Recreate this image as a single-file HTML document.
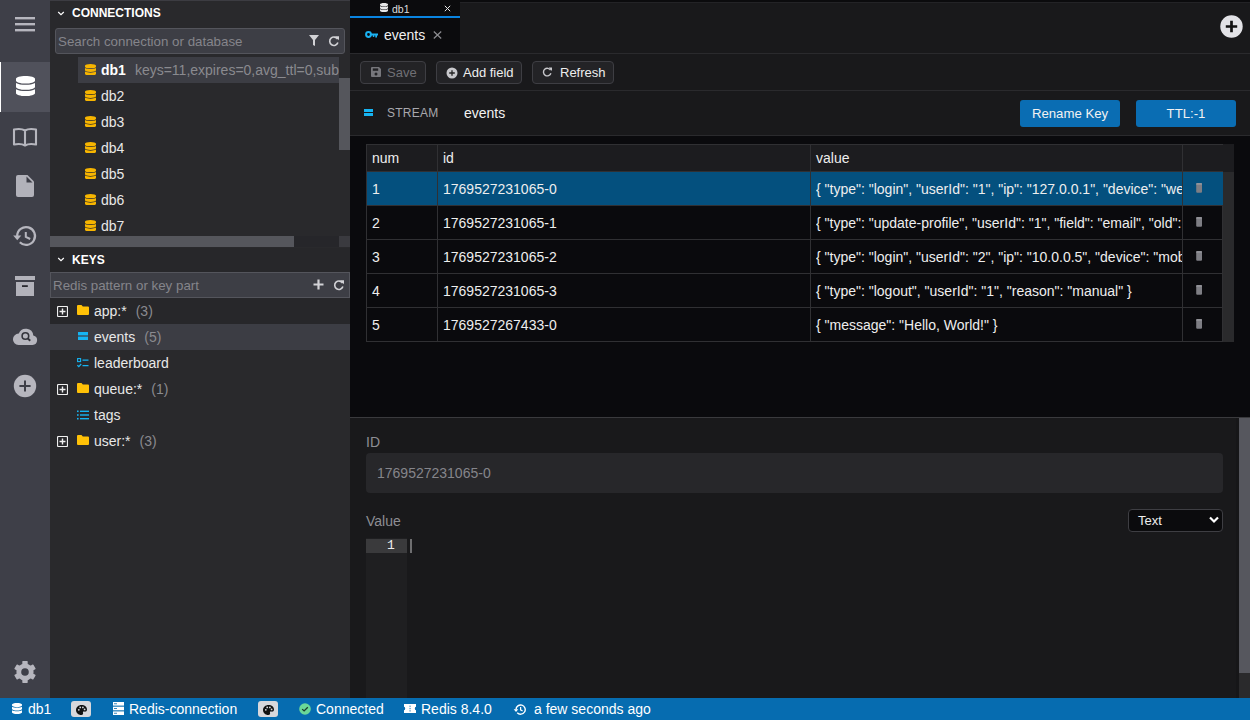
<!DOCTYPE html>
<html><head><meta charset="utf-8">
<style>
*{box-sizing:border-box;margin:0;padding:0}
html,body{width:1250px;height:720px;overflow:hidden;background:#19191b;font-family:"Liberation Sans",sans-serif;color:#e5e5e5}
.a{position:absolute}
svg{display:block}
#iconbar{left:0;top:0;width:50px;height:698px;background:#3e3f48}
#conn{left:50px;top:0;width:300px;height:698px;background:#29292c;overflow:hidden}
#main{left:350px;top:0;width:900px;height:698px;background:#19191b;overflow:hidden}
#status{left:0;top:698px;width:1250px;height:22px;background:#066cb0;color:#fff;font-size:14px}
.hdr{font-size:12px;font-weight:bold;color:#fff;line-height:14px}
.ph{color:#85858b;font-size:13.33px;line-height:16px;white-space:nowrap}
.row{height:26px;font-size:14px;line-height:16px;white-space:nowrap;color:#e8e8e8}
.cnt{color:#8a8a8f}
.btn{height:23px;border:1px solid #3e3e43;border-radius:4px;background:#232326;font-size:13px;line-height:16px;color:#e8e8e8;white-space:nowrap}
.pbtn{height:27px;border-radius:3px;background:#0a6db3;font-size:13.2px;color:#f2f2f2;text-align:center;line-height:27px}
table{border-collapse:collapse}
.tb{left:16px;top:144px;width:868px;font-size:14px;color:#eee}
.tr{position:absolute;left:0;width:857px;height:34px;border-bottom:1px solid #2c2c2f}
.c{position:absolute;top:0;height:100%;border-left:1px solid #2c2c2f;line-height:34px;padding-left:6px;white-space:nowrap;overflow:hidden}
.st{font-size:14px;line-height:22px;white-space:nowrap}
</style></head>
<body>
<!-- ICON BAR -->
<div id="iconbar" class="a">
  <div class="a" style="left:0;top:62px;width:50px;height:50px;background:#50515b"></div>
  <div class="a" style="left:0;top:62px;width:1px;height:50px;background:#fff"></div>
</div>

<!-- CONNECTIONS PANEL -->
<div id="conn" class="a">
  <div class="a" style="left:0;top:0;width:300px;height:1px;background:#3c3c42"></div>
  <div class="a hdr" style="left:22px;top:6px">CONNECTIONS</div>
  <div class="a" style="left:5px;top:28px;width:290px;height:26px;border:1px solid #54555c;border-radius:3px;background:#3d3e45"></div>
  <div class="a ph" style="left:8px;top:34px">Search connection or database</div>

  <div class="a" style="left:28px;top:57px;width:261px;height:26px;background:#3c3d44"></div>
  <div class="a row" style="left:51px;top:62px"><b style="color:#fff">db1</b><span class="cnt" style="margin-left:9px">keys=11,expires=0,avg_ttl=0,sub</span></div>
  <div class="a row" style="left:51px;top:88px">db2</div>
  <div class="a row" style="left:51px;top:114px">db3</div>
  <div class="a row" style="left:51px;top:140px">db4</div>
  <div class="a row" style="left:51px;top:166px">db5</div>
  <div class="a row" style="left:51px;top:192px">db6</div>
  <div class="a row" style="left:51px;top:218px">db7</div>
  <!-- v scrollbar -->
  <div class="a" style="left:289px;top:57px;width:11px;height:180px;background:#29292c"></div>
  <div class="a" style="left:289px;top:78px;width:11px;height:72px;background:#55565c"></div>
  <!-- h scrollbar -->
  <div class="a" style="left:0;top:236px;width:289px;height:11px;background:#26262a"></div>
  <div class="a" style="left:0;top:236px;width:244px;height:11px;background:#55565c"></div>
  <div class="a" style="left:289px;top:236px;width:11px;height:11px;background:#3a3a3f"></div>

  <!-- KEYS -->
  <div class="a" style="left:0;top:248px;width:300px;height:24px;background:#27272a"></div>
  <div class="a hdr" style="left:22px;top:253px">KEYS</div>
  <div class="a" style="left:0;top:272px;width:300px;height:26px;border:1px solid #54555c;background:#3d3e45"></div>
  <div class="a ph" style="left:3px;top:278px">Redis pattern or key part</div>

  <div class="a" style="left:0;top:298px;width:300px;height:26px;background:#27272a"></div>
  <div class="a" style="left:0;top:324px;width:300px;height:26px;background:#3c3d44"></div>
  <div class="a row" style="left:44px;top:303px">app:*<span class="cnt" style="margin-left:9px">(3)</span></div>
  <div class="a row" style="left:44px;top:329px">events<span class="cnt" style="margin-left:9px">(5)</span></div>
  <div class="a row" style="left:44px;top:355px">leaderboard</div>
  <div class="a row" style="left:44px;top:381px">queue:*<span class="cnt" style="margin-left:9px">(1)</span></div>
  <div class="a row" style="left:44px;top:407px">tags</div>
  <div class="a row" style="left:44px;top:433px">user:*<span class="cnt" style="margin-left:9px">(3)</span></div>
</div>

<!-- MAIN -->
<div id="main" class="a">
  <!-- tab bars -->
  <div class="a" style="left:0;top:0;width:900px;height:2px;background:#0b0b0d"></div>
  <div class="a" style="left:0;top:2px;width:900px;height:1px;background:#232326"></div>
  <div class="a" style="left:0;top:0;width:110px;height:53px;background:#0b0b0d"></div>
  <div class="a" style="left:0;top:16px;width:110px;height:2px;background:#0a84e0"></div>
  <div class="a" style="left:42px;top:1.5px;font-size:10.5px;line-height:14px;color:#ddd">db1</div>
  <div class="a" style="left:34px;top:25px;font-size:14px;line-height:20px;color:#f0f0f0">events</div>
  <div class="a" style="left:0;top:53px;width:900px;height:1px;background:#2a2a2d"></div>

  <!-- toolbar -->
  <div class="a btn" style="left:10px;top:61px;width:66px"></div>
  <div class="a btn" style="left:86px;top:61px;width:86px"></div>
  <div class="a btn" style="left:182px;top:61px;width:82px"></div>
  <div class="a" style="left:37px;top:65px;font-size:13px;line-height:16px;color:#707075">Save</div>
  <div class="a" style="left:113px;top:65px;font-size:13px;line-height:16px;color:#eee">Add field</div>
  <div class="a" style="left:210px;top:65px;font-size:13px;line-height:16px;color:#eee">Refresh</div>
  <div class="a" style="left:0;top:90px;width:900px;height:1px;background:#2a2a2d"></div>

  <!-- key info -->
  <div class="a" style="left:37px;top:105px;font-size:12px;letter-spacing:0.25px;line-height:16px;color:#a8a8ad">STREAM</div>
  <div class="a" style="left:114px;top:104px;font-size:14px;line-height:18px;color:#f2f2f2">events</div>
  <div class="a pbtn" style="left:670px;top:100px;width:100px">Rename Key</div>
  <div class="a pbtn" style="left:786px;top:100px;width:100px">TTL:-1</div>
  <div class="a" style="left:0;top:135px;width:900px;height:1px;background:#2a2a2d"></div>

  <!-- table area -->
  <div class="a" style="left:0;top:136px;width:900px;height:281px;background:#0a0a0d"></div>
  <div class="a" style="left:0;top:417px;width:900px;height:1px;background:#3a3a3d"></div>
  <!-- table -->
  <div class="a" style="left:16px;top:144px;width:857px;height:198px;background:#0a0a0d;border:1px solid #303033"></div>
  <div class="a" style="left:17px;top:145px;width:856px;height:26px;background:#1c1c1f"></div>
  <div class="a" style="left:873px;top:144px;width:11px;height:28px;background:#1c1c1f"></div>
  <div class="a" style="left:873px;top:172px;width:11px;height:170px;background:#2a2a2c"></div>
  <div class="a" style="left:17px;top:172px;width:856px;height:33px;background:#04507e"></div>
  <div class="a" style="left:16px;top:171px;width:857px;height:1px;background:#303033"></div>
  <div class="a" style="left:16px;top:205px;width:857px;height:1px;background:#303033"></div>
  <div class="a" style="left:16px;top:239px;width:857px;height:1px;background:#303033"></div>
  <div class="a" style="left:16px;top:273px;width:857px;height:1px;background:#303033"></div>
  <div class="a" style="left:16px;top:307px;width:857px;height:1px;background:#303033"></div>
  <div class="a" style="left:87px;top:144px;width:1px;height:198px;background:#303033"></div>
  <div class="a" style="left:460px;top:144px;width:1px;height:198px;background:#303033"></div>
  <div class="a" style="left:832px;top:144px;width:1px;height:198px;background:#303033"></div>
  <div class="a" style="left:0;top:0;font-size:14px;line-height:16px;color:#eee;white-space:nowrap">
    <div class="a" style="left:22px;top:150px">num</div>
    <div class="a" style="left:93px;top:150px">id</div>
    <div class="a" style="left:466px;top:150px">value</div>
    <div class="a" style="left:22px;top:181px">1</div>
    <div class="a" style="left:22px;top:215px">2</div>
    <div class="a" style="left:22px;top:249px">3</div>
    <div class="a" style="left:22px;top:283px">4</div>
    <div class="a" style="left:22px;top:317px">5</div>
    <div class="a" style="left:93px;top:181px">1769527231065-0</div>
    <div class="a" style="left:93px;top:215px">1769527231065-1</div>
    <div class="a" style="left:93px;top:249px">1769527231065-2</div>
    <div class="a" style="left:93px;top:283px">1769527231065-3</div>
    <div class="a" style="left:93px;top:317px">1769527267433-0</div>
    <div class="a" style="left:466px;top:181px;width:366px;overflow:hidden">{ "type": "login", "userId": "1", "ip": "127.0.0.1", "device": "web" }</div>
    <div class="a" style="left:466px;top:215px;width:366px;overflow:hidden">{ "type": "update-profile", "userId": "1", "field": "email", "old": "a" }</div>
    <div class="a" style="left:466px;top:249px;width:366px;overflow:hidden">{ "type": "login", "userId": "2", "ip": "10.0.0.5", "device": "mobile" }</div>
    <div class="a" style="left:466px;top:283px">{ "type": "logout", "userId": "1", "reason": "manual" }</div>
    <div class="a" style="left:466px;top:317px">{ "message": "Hello, World!" }</div>
  </div>

  <!-- bottom panel -->
  <div class="a" style="left:16px;top:434px;font-size:14px;line-height:16px;color:#8e8e94">ID</div>
  <div class="a" style="left:16px;top:453px;width:857px;height:40px;border-radius:4px;background:#27272a"></div>
  <div class="a" style="left:27px;top:465px;font-size:14px;line-height:16px;color:#85858b">1769527231065-0</div>
  <div class="a" style="left:16px;top:513px;font-size:14px;line-height:16px;color:#8e8e94">Value</div>
  <div class="a" style="left:778px;top:509px;width:95px;height:23px;border:1px solid #3e3e43;border-radius:4px;background:#0b0b0d"></div>
  <div class="a" style="left:788px;top:513px;font-size:13px;line-height:16px;color:#eee">Text</div>
  <div class="a" style="left:16px;top:538px;width:41px;height:160px;background:#1f1f21"></div>
  <div class="a" style="left:16px;top:539px;width:41px;height:14px;background:#3a3a3c"></div>
  <div class="a" style="left:37px;top:538px;font-family:'Liberation Mono',monospace;font-size:13px;line-height:15px;color:#eee">1</div>
  <div class="a" style="left:60px;top:539px;width:2px;height:14px;background:#6e6e70"></div>
  <!-- right scrollbar -->
  <div class="a" style="left:886px;top:418px;width:3px;height:280px;background:#161618"></div><div class="a" style="left:889px;top:418px;width:11px;height:280px;background:#2a2a2c"></div><div class="a" style="left:889px;top:418px;width:11px;height:255px;background:#56575e"></div>
</div>

<!-- STATUS BAR -->
<div id="status" class="a">
  <div class="a st" style="left:28px;top:0">db1</div>
  <div class="a" style="left:71px;top:3px;width:20px;height:16px;border-radius:3px;background:#d8d8dc"></div>
  <div class="a st" style="left:129px;top:0">Redis-connection</div>
  <div class="a" style="left:258px;top:3px;width:20px;height:16px;border-radius:3px;background:#d8d8dc"></div>
  <div class="a st" style="left:316px;top:0">Connected</div>
  <div class="a st" style="left:421px;top:0">Redis 8.4.0</div>
  <div class="a st" style="left:534px;top:0">a few seconds ago</div>
</div>
<!-- ICONS -->
<div class="a" style="left:0;top:0;width:1250px;height:720px;pointer-events:none">
<!-- hamburger -->
<svg class="a" style="left:15px;top:16px" width="20" height="16"><rect x="0" y="1" width="20" height="2.4" fill="#b6b6be"/><rect x="0" y="7" width="20" height="2.4" fill="#b6b6be"/><rect x="0" y="13" width="20" height="2.4" fill="#b6b6be"/></svg>
<!-- database big -->
<svg class="a" style="left:16px;top:76px" width="19" height="20" viewBox="0 0 448 512" preserveAspectRatio="none"><path fill="#fff" d="M448 73.143v45.714C448 159.143 347.667 192 224 192S0 159.143 0 118.857V73.143C0 32.857 100.333 0 224 0s224 32.857 224 73.143zM448 176v102.857C448 319.143 347.667 352 224 352S0 319.143 0 278.857V176c48.125 33.143 136.208 48.572 224 48.572S399.874 209.143 448 176zm0 160v102.857C448 479.143 347.667 512 224 512S0 479.143 0 438.857V336c48.125 33.143 136.208 48.572 224 48.572S399.874 369.143 448 336z"/></svg>
<!-- book -->
<svg class="a" style="left:12px;top:127px" width="26" height="20" viewBox="0 0 26 20"><path d="M13 3.5C10.5 2 6 1.8 2 2.5V17.5C6 16.8 10.5 17 13 18.5C15.5 17 20 16.8 24 17.5V2.5C20 1.8 15.5 2 13 3.5ZM13 3.5V18.5" fill="none" stroke="#b6b6be" stroke-width="2.1" stroke-linejoin="round"/></svg>
<!-- file -->
<svg class="a" style="left:16px;top:175px" width="18" height="22" viewBox="0 0 18 22"><path d="M2 0H11.5L18 6.5V20Q18 22 16 22H2Q0 22 0 20V2Q0 0 2 0Z" fill="#b2b2ba"/><path d="M10.5 1.5V7.5H16.5Z" fill="#3e3f48"/></svg>
<!-- history -->
<svg class="a" style="left:12px;top:224px" width="26" height="24" viewBox="0 0 26 24"><path d="M5.2 12A8.9 8.9 0 1 1 7.8 18.3" fill="none" stroke="#b6b6be" stroke-width="2.2"/><path d="M1.2 11.6H9.3L5.25 16.2Z" fill="#b6b6be"/><path d="M13.8 8V12.8L18.2 15" fill="none" stroke="#b6b6be" stroke-width="2"/></svg>
<!-- archive -->
<svg class="a" style="left:15px;top:276px" width="20" height="21" viewBox="0 0 20 21"><rect x="0" y="0" width="20" height="4" fill="#b2b2ba"/><rect x="1" y="6" width="18" height="14" fill="#b2b2ba"/><rect x="7" y="9.2" width="5.8" height="1.8" fill="#2a2a30"/></svg>
<!-- cloud search -->
<svg class="a" style="left:12px;top:326px" width="26" height="20" viewBox="0 0 26 20"><path d="M6.5 19H20.5A4.8 4.8 0 0 0 21.3 9.5A7.5 7.5 0 0 0 6.8 7.6A5.7 5.7 0 0 0 6.5 19Z" fill="#b6b6be"/><circle cx="13.4" cy="10" r="3.3" fill="none" stroke="#34353c" stroke-width="1.6"/><path d="M15.8 12.4L18.2 14.8" stroke="#34353c" stroke-width="2"/></svg>
<!-- plus circle -->
<svg class="a" style="left:13px;top:374px" width="24" height="24" viewBox="0 0 24 24"><circle cx="12" cy="12" r="11.2" fill="#b6b6be"/><path d="M12 6.4V17.6M6.4 12H17.6" stroke="#3e3f48" stroke-width="2"/></svg>
<!-- gear -->
<svg class="a" style="left:13px;top:660px" width="24" height="24" viewBox="0 0 24 24"><g fill="#b6b6be"><circle cx="12" cy="12" r="8.6"/><rect x="9.3" y="1.1" width="5.4" height="21.8" rx="0.6"/><rect x="9.3" y="1.1" width="5.4" height="21.8" rx="0.6" transform="rotate(60 12 12)"/><rect x="9.3" y="1.1" width="5.4" height="21.8" rx="0.6" transform="rotate(120 12 12)"/></g><circle cx="12" cy="12" r="3.8" fill="#3e3f48"/></svg>

<!-- conn header chevrons -->
<svg class="a" style="left:57px;top:11px" width="8" height="5"><path d="M1.2 1L4 3.6L6.8 1" fill="none" stroke="#fff" stroke-width="1.2"/></svg>
<svg class="a" style="left:57px;top:257px" width="8" height="5"><path d="M1.2 1L4 3.6L6.8 1" fill="none" stroke="#fff" stroke-width="1.2"/></svg>
<!-- filter -->
<svg class="a" style="left:309px;top:35px" width="10" height="11" viewBox="0 0 10 11"><path d="M0 0H10L6 5V11L4 10V5Z" fill="#d2d2d6"/></svg>
<!-- refresh conn -->
<svg class="a" style="left:328px;top:35px" width="12" height="12" viewBox="0 0 12 12"><path d="M9.6 4.2A4.2 4.2 0 1 0 9.9 7.6" fill="none" stroke="#d2d2d6" stroke-width="1.6"/><path d="M7 1.2H11V5.2Z" fill="#d2d2d6"/></svg>
<!-- keys plus -->
<svg class="a" style="left:313px;top:279px" width="11" height="11"><path d="M5.5 0.5V10.5M0.5 5.5H10.5" stroke="#d2d2d6" stroke-width="2.2"/></svg>
<!-- keys refresh -->
<svg class="a" style="left:333px;top:279px" width="12" height="12" viewBox="0 0 12 12"><path d="M9.6 4.2A4.2 4.2 0 1 0 9.9 7.6" fill="none" stroke="#d2d2d6" stroke-width="1.6"/><path d="M7 1.2H11V5.2Z" fill="#d2d2d6"/></svg>
</div>
<div class="a" style="left:0;top:0;width:1250px;height:720px;pointer-events:none">
<svg class="a" style="left:84.7px;top:63.7px" width="11" height="11.6" viewBox="0 0 448 512" preserveAspectRatio="none"><path fill="#f7b500" d="M448 73.143v45.714C448 159.143 347.667 192 224 192S0 159.143 0 118.857V73.143C0 32.857 100.333 0 224 0s224 32.857 224 73.143zM448 176v102.857C448 319.143 347.667 352 224 352S0 319.143 0 278.857V176c48.125 33.143 136.208 48.572 224 48.572S399.874 209.143 448 176zm0 160v102.857C448 479.143 347.667 512 224 512S0 479.143 0 438.857V336c48.125 33.143 136.208 48.572 224 48.572S399.874 369.143 448 336z"/></svg>
<svg class="a" style="left:84.7px;top:89.7px" width="11" height="11.6" viewBox="0 0 448 512" preserveAspectRatio="none"><path fill="#f7b500" d="M448 73.143v45.714C448 159.143 347.667 192 224 192S0 159.143 0 118.857V73.143C0 32.857 100.333 0 224 0s224 32.857 224 73.143zM448 176v102.857C448 319.143 347.667 352 224 352S0 319.143 0 278.857V176c48.125 33.143 136.208 48.572 224 48.572S399.874 209.143 448 176zm0 160v102.857C448 479.143 347.667 512 224 512S0 479.143 0 438.857V336c48.125 33.143 136.208 48.572 224 48.572S399.874 369.143 448 336z"/></svg>
<svg class="a" style="left:84.7px;top:115.7px" width="11" height="11.6" viewBox="0 0 448 512" preserveAspectRatio="none"><path fill="#f7b500" d="M448 73.143v45.714C448 159.143 347.667 192 224 192S0 159.143 0 118.857V73.143C0 32.857 100.333 0 224 0s224 32.857 224 73.143zM448 176v102.857C448 319.143 347.667 352 224 352S0 319.143 0 278.857V176c48.125 33.143 136.208 48.572 224 48.572S399.874 209.143 448 176zm0 160v102.857C448 479.143 347.667 512 224 512S0 479.143 0 438.857V336c48.125 33.143 136.208 48.572 224 48.572S399.874 369.143 448 336z"/></svg>
<svg class="a" style="left:84.7px;top:141.7px" width="11" height="11.6" viewBox="0 0 448 512" preserveAspectRatio="none"><path fill="#f7b500" d="M448 73.143v45.714C448 159.143 347.667 192 224 192S0 159.143 0 118.857V73.143C0 32.857 100.333 0 224 0s224 32.857 224 73.143zM448 176v102.857C448 319.143 347.667 352 224 352S0 319.143 0 278.857V176c48.125 33.143 136.208 48.572 224 48.572S399.874 209.143 448 176zm0 160v102.857C448 479.143 347.667 512 224 512S0 479.143 0 438.857V336c48.125 33.143 136.208 48.572 224 48.572S399.874 369.143 448 336z"/></svg>
<svg class="a" style="left:84.7px;top:167.7px" width="11" height="11.6" viewBox="0 0 448 512" preserveAspectRatio="none"><path fill="#f7b500" d="M448 73.143v45.714C448 159.143 347.667 192 224 192S0 159.143 0 118.857V73.143C0 32.857 100.333 0 224 0s224 32.857 224 73.143zM448 176v102.857C448 319.143 347.667 352 224 352S0 319.143 0 278.857V176c48.125 33.143 136.208 48.572 224 48.572S399.874 209.143 448 176zm0 160v102.857C448 479.143 347.667 512 224 512S0 479.143 0 438.857V336c48.125 33.143 136.208 48.572 224 48.572S399.874 369.143 448 336z"/></svg>
<svg class="a" style="left:84.7px;top:193.7px" width="11" height="11.6" viewBox="0 0 448 512" preserveAspectRatio="none"><path fill="#f7b500" d="M448 73.143v45.714C448 159.143 347.667 192 224 192S0 159.143 0 118.857V73.143C0 32.857 100.333 0 224 0s224 32.857 224 73.143zM448 176v102.857C448 319.143 347.667 352 224 352S0 319.143 0 278.857V176c48.125 33.143 136.208 48.572 224 48.572S399.874 209.143 448 176zm0 160v102.857C448 479.143 347.667 512 224 512S0 479.143 0 438.857V336c48.125 33.143 136.208 48.572 224 48.572S399.874 369.143 448 336z"/></svg>
<svg class="a" style="left:84.7px;top:219.7px" width="11" height="11.6" viewBox="0 0 448 512" preserveAspectRatio="none"><path fill="#f7b500" d="M448 73.143v45.714C448 159.143 347.667 192 224 192S0 159.143 0 118.857V73.143C0 32.857 100.333 0 224 0s224 32.857 224 73.143zM448 176v102.857C448 319.143 347.667 352 224 352S0 319.143 0 278.857V176c48.125 33.143 136.208 48.572 224 48.572S399.874 209.143 448 176zm0 160v102.857C448 479.143 347.667 512 224 512S0 479.143 0 438.857V336c48.125 33.143 136.208 48.572 224 48.572S399.874 369.143 448 336z"/></svg>
<svg class="a" style="left:57px;top:306px" width="11" height="11" viewBox="0 0 11 11"><rect x="0.5" y="0.5" width="10" height="10" rx="1" fill="none" stroke="#f0f0f0" stroke-width="1.2"/><path d="M5.5 2.5V8.5M2.5 5.5H8.5" stroke="#f0f0f0" stroke-width="1.4"/></svg>
<svg class="a" style="left:57px;top:384px" width="11" height="11" viewBox="0 0 11 11"><rect x="0.5" y="0.5" width="10" height="10" rx="1" fill="none" stroke="#f0f0f0" stroke-width="1.2"/><path d="M5.5 2.5V8.5M2.5 5.5H8.5" stroke="#f0f0f0" stroke-width="1.4"/></svg>
<svg class="a" style="left:57px;top:436px" width="11" height="11" viewBox="0 0 11 11"><rect x="0.5" y="0.5" width="10" height="10" rx="1" fill="none" stroke="#f0f0f0" stroke-width="1.2"/><path d="M5.5 2.5V8.5M2.5 5.5H8.5" stroke="#f0f0f0" stroke-width="1.4"/></svg>
<svg class="a" style="left:77px;top:305px" width="12" height="10" viewBox="0 0 12 10"><path d="M0 1Q0 0 1 0H4.5L5.8 1.5H11Q12 1.5 12 2.5V9Q12 10 11 10H1Q0 10 0 9Z" fill="#ffc107"/></svg>
<svg class="a" style="left:77px;top:383px" width="12" height="10" viewBox="0 0 12 10"><path d="M0 1Q0 0 1 0H4.5L5.8 1.5H11Q12 1.5 12 2.5V9Q12 10 11 10H1Q0 10 0 9Z" fill="#ffc107"/></svg>
<svg class="a" style="left:77px;top:435px" width="12" height="10" viewBox="0 0 12 10"><path d="M0 1Q0 0 1 0H4.5L5.8 1.5H11Q12 1.5 12 2.5V9Q12 10 11 10H1Q0 10 0 9Z" fill="#ffc107"/></svg>
<svg class="a" style="left:78px;top:332px" width="10" height="8"><rect x="0" y="0" width="10" height="3.4" fill="#16b4f2"/><rect x="0" y="4.6" width="10" height="3.4" fill="#16b4f2"/></svg>
<svg class="a" style="left:77px;top:358px" width="12" height="10" viewBox="0 0 12 10"><rect x="0.6" y="0.6" width="3" height="3" fill="none" stroke="#16b4f2" stroke-width="1.1"/><path d="M5.5 2.1H11.5M5.5 7.6H11.5" stroke="#16b4f2" stroke-width="1.4"/><path d="M0.4 7.2L1.8 8.7L4.2 6" fill="none" stroke="#16b4f2" stroke-width="1.2"/></svg>
<svg class="a" style="left:77px;top:410px" width="12" height="10" viewBox="0 0 12 10"><g fill="#16b4f2"><rect x="0" y="0.5" width="1.6" height="1.6"/><rect x="0" y="4.2" width="1.6" height="1.6"/><rect x="0" y="7.9" width="1.6" height="1.6"/><rect x="3" y="0.6" width="9" height="1.4"/><rect x="3" y="4.3" width="9" height="1.4"/><rect x="3" y="8" width="9" height="1.4"/></g></svg>
<svg class="a" style="left:380px;top:3px" width="8" height="9" viewBox="0 0 448 512" preserveAspectRatio="none"><path fill="#e6e6e6" d="M448 73.143v45.714C448 159.143 347.667 192 224 192S0 159.143 0 118.857V73.143C0 32.857 100.333 0 224 0s224 32.857 224 73.143zM448 176v102.857C448 319.143 347.667 352 224 352S0 319.143 0 278.857V176c48.125 33.143 136.208 48.572 224 48.572S399.874 209.143 448 176zm0 160v102.857C448 479.143 347.667 512 224 512S0 479.143 0 438.857V336c48.125 33.143 136.208 48.572 224 48.572S399.874 369.143 448 336z"/></svg>
<svg class="a" style="left:444px;top:5px" width="7" height="7"><path d="M0.8 0.8L6.2 6.2M6.2 0.8L0.8 6.2" stroke="#e6e6e6" stroke-width="1"/></svg>
<svg class="a" style="left:365px;top:31px" width="13" height="7" viewBox="0 0 13 7"><circle cx="3.5" cy="3.5" r="2.4" fill="none" stroke="#1ab2f2" stroke-width="2"/><path d="M5.5 2.4H13V4.5H12V6.5H10.3V4.5H9.3V6H7.8V4.5H5.5Z" fill="#1ab2f2"/></svg>
<svg class="a" style="left:433px;top:31px" width="9" height="8"><path d="M0.8 0.5L8.2 7.5M8.2 0.5L0.8 7.5" stroke="#8c8c90" stroke-width="1.2"/></svg>
<svg class="a" style="left:1220px;top:14.5px" width="23" height="23" viewBox="0 0 23 23"><circle cx="11.5" cy="11.5" r="11.2" fill="#e2e2e6"/><path d="M11.5 5.8V17.2M5.8 11.5H17.2" stroke="#111" stroke-width="2.7"/></svg>
<svg class="a" style="left:371px;top:67px" width="10" height="10" viewBox="0 0 10 10"><path d="M0 1Q0 0 1 0H8L10 2V9Q10 10 9 10H1Q0 10 0 9Z" fill="#77777c"/><rect x="1.8" y="1.4" width="5.4" height="2.4" fill="#232326"/><circle cx="5" cy="6.9" r="1.5" fill="#232326"/></svg>
<svg class="a" style="left:445.5px;top:66.5px" width="12" height="12" viewBox="0 0 12 12"><circle cx="6" cy="6" r="5.5" fill="#c8c8cc"/><path d="M6 3.2V8.8M3.2 6H8.8" stroke="#222" stroke-width="1.3"/></svg>
<svg class="a" style="left:542px;top:67px" width="11" height="10" viewBox="0 0 11 10"><path d="M8.6 3.2A3.8 3.8 0 1 0 8.9 6.3" fill="none" stroke="#c8c8cc" stroke-width="1.4"/><path d="M6.6 0.6H10V4Z" fill="#c8c8cc"/></svg>
<svg class="a" style="left:364px;top:109px" width="9" height="7"><rect x="0" y="0" width="9" height="3" fill="#16b4f2"/><rect x="0" y="4" width="9" height="3" fill="#16b4f2"/></svg>
<svg class="a" style="left:1195px;top:183px" width="8" height="10" viewBox="0 0 8 10"><rect x="1.2" y="0.3" width="5.8" height="9.5" rx="1" fill="#7e7e84"/><rect x="1.2" y="0.3" width="5.8" height="1.2" rx="0.5" fill="#a0a0a6"/></svg>
<svg class="a" style="left:1195px;top:217px" width="8" height="10" viewBox="0 0 8 10"><rect x="1.2" y="0.3" width="5.8" height="9.5" rx="1" fill="#7e7e84"/><rect x="1.2" y="0.3" width="5.8" height="1.2" rx="0.5" fill="#a0a0a6"/></svg>
<svg class="a" style="left:1195px;top:251px" width="8" height="10" viewBox="0 0 8 10"><rect x="1.2" y="0.3" width="5.8" height="9.5" rx="1" fill="#7e7e84"/><rect x="1.2" y="0.3" width="5.8" height="1.2" rx="0.5" fill="#a0a0a6"/></svg>
<svg class="a" style="left:1195px;top:285px" width="8" height="10" viewBox="0 0 8 10"><rect x="1.2" y="0.3" width="5.8" height="9.5" rx="1" fill="#7e7e84"/><rect x="1.2" y="0.3" width="5.8" height="1.2" rx="0.5" fill="#a0a0a6"/></svg>
<svg class="a" style="left:1195px;top:319px" width="8" height="10" viewBox="0 0 8 10"><rect x="1.2" y="0.3" width="5.8" height="9.5" rx="1" fill="#7e7e84"/><rect x="1.2" y="0.3" width="5.8" height="1.2" rx="0.5" fill="#a0a0a6"/></svg>
<svg class="a" style="left:1209px;top:516px" width="10" height="8"><path d="M1 1.5L5 5.5L9 1.5" fill="none" stroke="#fff" stroke-width="2.2"/></svg>
<svg class="a" style="left:12px;top:703px" width="10" height="11" viewBox="0 0 448 512" preserveAspectRatio="none"><path fill="#fff" d="M448 73.143v45.714C448 159.143 347.667 192 224 192S0 159.143 0 118.857V73.143C0 32.857 100.333 0 224 0s224 32.857 224 73.143zM448 176v102.857C448 319.143 347.667 352 224 352S0 319.143 0 278.857V176c48.125 33.143 136.208 48.572 224 48.572S399.874 209.143 448 176zm0 160v102.857C448 479.143 347.667 512 224 512S0 479.143 0 438.857V336c48.125 33.143 136.208 48.572 224 48.572S399.874 369.143 448 336z"/></svg>
<svg class="a" style="left:76px;top:705px" width="11" height="10" viewBox="0 0 11 10"><path d="M5.5 0C8.8 0 11 2 11 4.6C11 6.6 9.4 6.8 8.2 6.6C7.2 6.5 6.7 7 7 7.8C7.3 8.6 7 10 5.3 10C2.3 10 0 7.8 0 5C0 2.2 2.4 0 5.5 0Z" fill="#111"/><circle cx="2.8" cy="4.8" r="0.9" fill="#d8d8dc"/><circle cx="4.2" cy="2.4" r="0.9" fill="#d8d8dc"/><circle cx="6.9" cy="2.4" r="0.9" fill="#d8d8dc"/><circle cx="8.6" cy="4.4" r="0.9" fill="#d8d8dc"/></svg>
<svg class="a" style="left:263px;top:705px" width="11" height="10" viewBox="0 0 11 10"><path d="M5.5 0C8.8 0 11 2 11 4.6C11 6.6 9.4 6.8 8.2 6.6C7.2 6.5 6.7 7 7 7.8C7.3 8.6 7 10 5.3 10C2.3 10 0 7.8 0 5C0 2.2 2.4 0 5.5 0Z" fill="#111"/><circle cx="2.8" cy="4.8" r="0.9" fill="#d8d8dc"/><circle cx="4.2" cy="2.4" r="0.9" fill="#d8d8dc"/><circle cx="6.9" cy="2.4" r="0.9" fill="#d8d8dc"/><circle cx="8.6" cy="4.4" r="0.9" fill="#d8d8dc"/></svg>
<svg class="a" style="left:113px;top:702px" width="11" height="13" viewBox="0 0 11 13"><g fill="#fff"><rect x="0" y="0" width="11" height="3.6"/><rect x="0" y="4.7" width="11" height="3.6"/><rect x="0" y="9.4" width="11" height="3.6"/></g><g fill="#066cb0"><rect x="1" y="1.4" width="3" height="0.8"/><rect x="1" y="6.1" width="3" height="0.8"/><rect x="1" y="10.8" width="3" height="0.8"/></g></svg>
<svg class="a" style="left:299px;top:703px" width="12" height="12" viewBox="0 0 12 12"><circle cx="6" cy="6" r="5.8" fill="#6bd898"/><path d="M3.2 6.1L5.1 7.9L8.8 4.2" fill="none" stroke="#1a3a2a" stroke-width="1.3"/></svg>
<svg class="a" style="left:404px;top:704px" width="12" height="9" viewBox="0 0 12 9"><path d="M0 0H12V2.8Q10.8 3 10.8 4.5Q10.8 6 12 6.2V9H0V6.2Q1.2 6 1.2 4.5Q1.2 3 0 2.8Z" fill="#fff"/><rect x="5.6" y="1.6" width="0.9" height="1.3" fill="#066cb0"/><rect x="5.6" y="3.9" width="0.9" height="1.3" fill="#066cb0"/><rect x="5.6" y="6.2" width="0.9" height="1.3" fill="#066cb0"/></svg>
<svg class="a" style="left:513px;top:704px" width="13" height="11" viewBox="0 0 13 11"><path d="M3 5.5A4.6 4.6 0 1 1 4.25 8.75" fill="none" stroke="#fff" stroke-width="1.4"/><path d="M0.7 5.2H5.3L3 7.9Z" fill="#fff"/><path d="M7.6 3V5.8L9.6 7" fill="none" stroke="#fff" stroke-width="1.2"/></svg>
</div>
</body></html>
